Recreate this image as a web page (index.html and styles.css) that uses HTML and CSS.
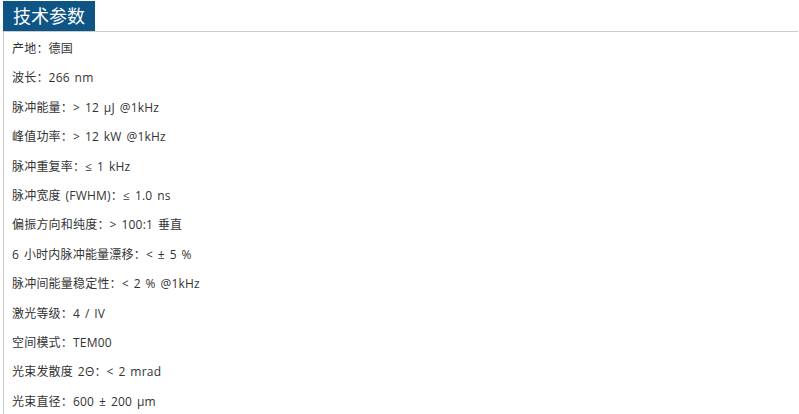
FILE: index.html
```html
<!DOCTYPE html>
<html lang="zh">
<head>
<meta charset="utf-8">
<link rel="stylesheet" href="styles.css">
</head>
<body>
<div class="box">
  <div class="title"><span class="tab">技术参数</span></div>
  <div class="content">
    <p>产地：德国</p>
    <p>波长：266 nm</p>
    <p>脉冲能量：&gt; 12 μJ @1kHz</p>
    <p>峰值功率：&gt; 12 kW @1kHz</p>
    <p>脉冲重复率：≤ 1 kHz</p>
    <p>脉冲宽度 (FWHM)：≤ 1.0 ns</p>
    <p>偏振方向和纯度：&gt; 100:1 垂直</p>
    <p>6 小时内脉冲能量漂移：&lt; ± 5 %</p>
    <p>脉冲间能量稳定性：&lt; 2 % @1kHz</p>
    <p>激光等级：4 / IV</p>
    <p>空间模式：TEM00</p>
    <p>光束发散度 2Θ：&lt; 2 mrad</p>
    <p>光束直径：600 ± 200 μm</p>
  </div>
</div>
</body>
</html>
```
FILE: styles.css
```css
html, body {
  margin: 0;
  padding: 0;
  background: #fff;
}
body {
  font-family: "Open Sans", "Noto Sans CJK SC", sans-serif;
  color: #333;
}
.box {
  margin: 1px 1px 0 3px;
}
.title {
  border-bottom: 1px solid #cccccc;
  height: 30px;
}
.tab {
  display: inline-block;
  height: 30px;
  line-height: 30px;
  padding: 0 10px;
  background: #0e5585;
  color: #fff;
  font-size: 18px;
}
.content {
  border-left: 1px solid #cccccc;
  padding: 2px 0 0 8px;
}
.content p {
  margin: 0;
  font-size: 12px;
  line-height: 29.4px;
  word-spacing: 1.5px;
  letter-spacing: 0.2px;
}
```
